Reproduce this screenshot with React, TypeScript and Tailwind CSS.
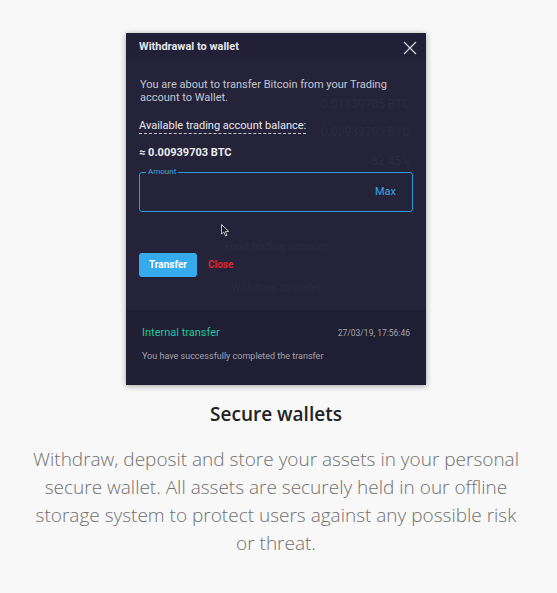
import React from "react";

export default function App() {
  const roboto = { fontFamily: "Roboto, 'Liberation Sans', sans-serif" };
  return (
    <div className="w-[557px] h-[593px] bg-[#f8f8f8] overflow-hidden">
      <div className="w-[552px] flex flex-col items-center pt-[33px]">
        <div
          className="relative w-[300px] h-[352px] bg-[#24233a] shadow-[0_1px_6px_rgba(0,0,0,0.35)] flex flex-col overflow-hidden"
          style={roboto}
        >
          {/* faint ghost content behind the dialog */}
          <div className="absolute inset-0 pointer-events-none text-[#2b2a41] text-[11px] leading-none">
            <div className="absolute right-[16px] top-[65px] text-[12px]">0.01139705 BTC</div>
            <div className="absolute right-[16px] top-[93px] text-[12px]">0.00939703 BTC</div>
            <div className="absolute right-[16px] top-[122px] text-[12px]">82.45%</div>
            <div className="absolute left-0 right-0 top-[208px] text-center">Fund trading account</div>
            <div className="absolute left-0 right-0 top-[249px] text-center">Withdraw to wallet</div>
          </div>

          <div className="relative h-[28px] bg-[#212036] flex items-center justify-between pl-[13px] pr-[9px]">
            <span className="text-[11px] font-bold text-[#e4e4ea] mt-[1px]">Withdrawal to wallet</span>
            <svg width="14" height="14" viewBox="0 0 14 14" className="mt-[1px]">
              <path d="M1 1 L13 13 M13 1 L1 13" stroke="#d8d8e0" strokeWidth="1.2" />
            </svg>
          </div>

          <div className="relative flex flex-col px-[13px] pt-[17px]">
            <p className="text-[11px] leading-[13px] text-[#c6c6d0] pl-[1px]">
              You are about to transfer Bitcoin from your Trading account to Wallet.
            </p>
            <div className="mt-[8px]">
              <span className="text-[11px] text-[#e8e8ee] border-b border-dashed border-[#c8c8d0] pb-[1px]">
                Available trading account balance:
              </span>
            </div>
            <div className="mt-[9px] text-[11px] font-bold text-[#eeeef2]">≈ 0.00939703 BTC</div>

            <div className="relative mt-[10px] h-[40px] w-[274px] border border-[#2c9bd6] rounded-[3px] flex items-center justify-end pr-[16px]">
              <span className="absolute left-[6px] -top-[6px] bg-[#24233a] px-[2px] text-[8px] leading-[10px] text-[#44a9e0]">
                Amount
              </span>
              <span className="text-[11px] text-[#3aa5e2] mt-[1px]">Max</span>
            </div>

            <div className="h-[41px] relative">
              <svg className="absolute left-[82px] top-[12px]" width="9" height="13" viewBox="0 0 9 13">
                <path d="M0.5 0.5 L0.5 10 L2.8 8 L4.5 12 L6 11.3 L4.4 7.5 L7.8 7.5 Z" fill="#1b1a2c" stroke="#d0d0d8" strokeWidth="0.9" />
              </svg>
            </div>

            <div className="flex items-center gap-[11px]">
              <button className="w-[58px] h-[24px] rounded-[3px] bg-[#35aaec] text-white text-[10px] font-bold">
                Transfer
              </button>
              <span className="text-[10px] font-bold text-[#e3242b]">Close</span>
            </div>
          </div>

          <div className="relative mt-auto h-[75px] bg-[#1f1e32] px-[16px] pt-[15px]">
            <div className="flex items-center justify-between">
              <span className="text-[11px] text-[#22c7a0]">Internal transfer</span>
              <span className="text-[8.5px] text-[#a4a4b0]">27/03/19, 17:56:46</span>
            </div>
            <div className="mt-[8px] text-[9px] text-[#a4a4b0]">You have successfully completed the transfer</div>
          </div>
        </div>

        <h2
          className="mt-[17px] text-[19px] font-semibold text-[#222] leading-[24px]"
          style={{ fontFamily: "'Open Sans', sans-serif" }}
        >
          Secure wallets
        </h2>
        <p
          className="mt-[19px] w-[496px] text-center text-[19px] leading-[28px] font-light text-[#707070]"
          style={{ fontFamily: "'Open Sans', sans-serif" }}
        >
          Withdraw, deposit and store your assets in your personal secure wallet. All assets are securely held in our offline storage system to protect users against any possible risk or threat.
        </p>
      </div>
    </div>
  );
}
